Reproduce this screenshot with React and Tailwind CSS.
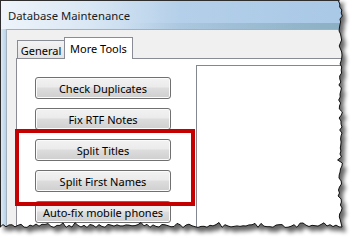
import React from 'react'

// torn-paper edge for the right and bottom of the window
function seeded(seed) {
  let s = seed
  return () => {
    s = (s * 9301 + 49297) % 233280
    return s / 233280
  }
}

function tornPath() {
  const r = seeded(11)
  const pts = [[-2, -2]]
  for (let y = -2; y <= 222; y += 3) {
    pts.push([339 + r() * 3.5 + (r() < 0.2 ? -1.5 : 0), y])
  }
  for (let x = 342; x >= -2; x -= 3) {
    pts.push([x, 224.5 + r() * 3 + (r() < 0.2 ? -2 : 0)])
  }
  return 'M' + pts.map(([x, y]) => `${x.toFixed(1)} ${y.toFixed(1)}`).join('L') + 'Z'
}

const torn = tornPath()

function TornEdge() {
  return (
    <svg className="absolute inset-0 pointer-events-none" width="359" height="244" viewBox="0 0 359 244">
      <defs>
        <filter id="blur" x="-10%" y="-10%" width="120%" height="120%">
          <feGaussianBlur stdDeviation="2" />
        </filter>
        <clipPath id="outside">
          <path clipRule="evenodd" d={`M-5 -5H365V250H-5Z${torn}`} />
        </clipPath>
      </defs>
      <path fillRule="evenodd" fill="#fff" d={`M-5 -5H365V250H-5Z${torn}`} />
      <g clipPath="url(#outside)">
        <path d={torn} transform="translate(4 5)" fill="#000" opacity="0.6" filter="url(#blur)" />
      </g>
      <path d={torn} fill="none" stroke="#111" strokeWidth="1" />
    </svg>
  )
}

function Btn({ children }) {
  return (
    <button className="shrink-0 h-[22px] w-[136px] rounded-[3px] border border-[#707070] bg-[linear-gradient(to_bottom,#f2f2f2,#ebebeb_45%,#dddddd_50%,#cfcfcf)] shadow-[inset_0_0_0_1px_#fbfbfb] text-[11px] leading-none text-black">
      {children}
    </button>
  )
}

export default function App() {
  return (
    <div className="relative w-[359px] h-[244px] overflow-hidden bg-white font-['Noto_Sans',sans-serif]">
      <div className="flex flex-col w-[359px] h-[244px] border-l border-t border-[#2e2e2e] bg-[#c6dbef]">
        <div className="shrink-0 h-[28px] flex flex-col bg-[linear-gradient(to_right,#eef4fa,#d9e7f4_25%,#b4cfe9_50%,#a8c8e6)]">
          <div className="h-[22px] flex items-end pl-[7px] text-[11.3px] leading-none text-[#1b1b1b] pb-[2px]">
            Database Maintenance
          </div>
          <div className="flex-1 bg-[linear-gradient(to_right,rgba(120,160,170,0)_35%,rgba(110,150,160,0.55))]" />
        </div>
        <div className="flex-1 min-h-0 flex">
          <div className="w-[5px] bg-[linear-gradient(to_right,#dce9f5,#b9d2ea)]" />
          <div className="flex-1 min-h-0 flex flex-col border-l border-t border-[#a3b1bd] bg-[#f0f0f0] pl-[9px] pt-[7px]">
            <div className="shrink-0 h-[21px] flex items-end">
              <div className="ml-[1px] w-[48px] h-[18px] flex items-center justify-center border border-b-0 border-[#898c95] bg-[linear-gradient(to_bottom,#f3f3f3,#e3e3e3)] text-[11px] leading-none text-black pt-[2px]">
                General
              </div>
              <div className="relative z-10 ml-[-1px] mb-[-1px] w-[69px] h-[22px] flex items-center justify-center border border-b-0 border-[#898c95] bg-white text-[11px] leading-none text-black">
                More Tools
              </div>
            </div>
            <div className="flex-1 min-h-0 overflow-hidden flex items-start border-l border-t border-[#898c95] bg-white pl-[18px]">
              <div className="shrink-0 mt-[18px] flex flex-col gap-[9px] w-[136px]">
                <Btn>Check Duplicates</Btn>
                <Btn>Fix RTF Notes</Btn>
                <Btn>Split Titles</Btn>
                <Btn>Split First Names</Btn>
                <Btn>Auto-fix mobile phones</Btn>
              </div>
              <div className="ml-[25px] mt-[6px] flex-1 h-[300px] border border-[#828790] bg-white" />
            </div>
          </div>
        </div>
      </div>
      <div className="absolute left-[15px] top-[129px] w-[180px] h-[77px] border-4 border-[#c40000]" />
      <TornEdge />
    </div>
  )
}
